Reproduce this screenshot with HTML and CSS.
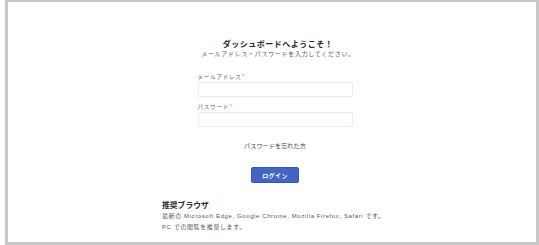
FILE: index.html
```html
<!DOCTYPE html>
<html lang="ja">
<head>
    <meta charset="UTF-8">
    <meta name="viewport" content="width=device-width, initial-scale=1.0">
    <title>ログイン</title>
    <link rel="stylesheet" href="styles.css">
</head>
<body>
    <div class="frame">
        <div class="login">
            <h1 class="login-title">ダッシュボードへようこそ！</h1>
            <p class="login-lead">メールアドレス・パスワードを入力してください。</p>

            <form class="login-form">
                <label class="field-label" for="email">メールアドレス<span class="required">*</span></label>
                <input id="email" class="field-input" type="email">

                <label class="field-label field-label-second" for="password">パスワード<span class="required">*</span></label>
                <input id="password" class="field-input" type="password">
            </form>

            <a class="forgot-link" href="#">パスワードを忘れた方</a>

            <button class="login-btn" type="button">ログイン</button>
        </div>

        <div class="browsers">
            <h2 class="browsers-title">推奨ブラウザ</h2>
            <p class="browsers-text">最新の Microsoft Edge, Google Chrome, Mozilla Firefox, Safari です。</p>
            <p class="browsers-text">PC での閲覧を推奨します。</p>
        </div>
    </div>
</body>
</html>
```

FILE: styles.css
```css
* {
    box-sizing: border-box;
    margin: 0;
    padding: 0;
}

body {
    font-family: 'Liberation Sans', 'Noto Sans CJK JP', sans-serif;
    background-color: #ffffff;
    color: #333333;
    width: 539px;
    height: 245px;
    overflow: hidden;
}

.frame {
    margin-left: 5px;
    height: 245px;
    border: 3px solid #c8c8c8;
    border-top-width: 2px;
    padding-top: 37px;
    padding-left: 6px;
    display: flex;
    flex-direction: column;
    align-items: center;
}

.login {
    display: flex;
    flex-direction: column;
    align-items: center;
}

.login-title {
    font-size: 8px;
    line-height: 11px;
    font-weight: bold;
    letter-spacing: 0.5px;
    color: #2b2b2b;
    margin-left: 6px;
}

.login-lead {
    font-size: 6px;
    line-height: 9px;
    letter-spacing: 0.7px;
    color: #555555;
    margin-left: 6px;
}

.login-form {
    width: 155px;
    margin-top: 14px;
    display: flex;
    flex-direction: column;
}

.field-label {
    font-size: 5.6px;
    line-height: 8px;
    letter-spacing: 0.7px;
    color: #666666;
    margin-bottom: 1px;
}

.field-label-second {
    margin-top: 6px;
}

.required {
    color: #e05050;
    font-size: 4.5px;
    vertical-align: top;
    margin-left: 1px;
}

.field-input {
    width: 100%;
    height: 15px;
    border: 1px solid #ececec;
    border-radius: 2px;
    background-color: #ffffff;
    outline: none;
}

.forgot-link {
    margin-top: 14px;
    font-size: 6.2px;
    line-height: 9px;
    color: #444444;
    text-decoration: none;
}

.login-btn {
    margin-top: 17px;
    width: 48px;
    height: 16px;
    background-color: #4264c2;
    color: #ffffff;
    border: 1px solid #3656b0;
    border-radius: 2px;
    font-family: inherit;
    font-size: 6px;
    font-weight: bold;
    letter-spacing: 0.4px;
    cursor: pointer;
}

.browsers {
    width: 226px;
    margin-top: 18px;
}

.browsers-title {
    font-size: 7.8px;
    line-height: 10px;
    font-weight: bold;
    color: #2b2b2b;
}

.browsers-text {
    font-size: 6px;
    line-height: 11px;
    letter-spacing: 0.6px;
    color: #555555;
}
```
